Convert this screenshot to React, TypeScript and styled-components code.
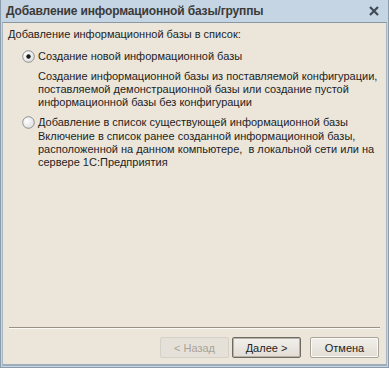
import React from "react";
import styled, { createGlobalStyle } from "styled-components";

const GlobalStyle = createGlobalStyle`
  html, body {
    margin: 0;
    padding: 0;
    background: #ffffff;
  }
  body {
    font-family: "Liberation Sans", Arial, sans-serif;
    font-size: 11px;
    color: #1e1e1e;
  }
`;

export default function App() {
  const [mode, setMode] = React.useState("create");

  return (
    <>
      <GlobalStyle />
      <Window>
        <TitleBar>
          <Title>Добавление информационной базы/группы</Title>
          <CloseButton aria-label="Закрыть">
            <svg width="10" height="10" viewBox="0 0 10 10">
              <path d="M1 1 L9 9 M9 1 L1 9" stroke="#3f4a55" strokeWidth="2.2" />
            </svg>
          </CloseButton>
        </TitleBar>
        <Body>
          <Content>
            <Caption>Добавление информационной базы в список:</Caption>
            <Option>
              <OptionLabel>
                <Radio id="r1" checked={mode === "create"} onClick={() => setMode("create")} />
                <span>Создание новой информационной базы</span>
              </OptionLabel>
              <Hint $gap={7}>
                Создание информационной базы из поставляемой конфигурации,
                <br />
                поставляемой демонстрационной базы или создание пустой
                <br />
                информационной базы без конфигурации
              </Hint>
            </Option>
            <Option>
              <OptionLabel>
                <Radio id="r2" checked={mode === "add"} onClick={() => setMode("add")} />
                <span>Добавление в список существующей информационной базы</span>
              </OptionLabel>
              <Hint $gap={1}>
                Включение в список ранее созданной информационной базы,
                <br />
                расположенной на данном компьютере,&nbsp; в локальной сети или на
                <br />
                сервере 1С:Предприятия
              </Hint>
            </Option>
          </Content>
          <Separator />
          <Buttons>
            <Button disabled>&lt; Назад</Button>
            <Button $primary>Далее &gt;</Button>
            <Button $wide>Отмена</Button>
          </Buttons>
        </Body>
      </Window>
    </>
  );
}

function Radio({ id, checked, onClick }: { id: string; checked: boolean; onClick: () => void }) {
  return (
    <RadioBox onClick={onClick}>
      <svg width="13" height="13" viewBox="0 0 13 13">
        <defs>
          <radialGradient id={id} cx="35%" cy="35%" r="75%">
            <stop offset="0%" stopColor="#ffffff" />
            <stop offset="100%" stopColor="#dcdcdc" />
          </radialGradient>
        </defs>
        <circle cx="6.5" cy="6.5" r="5.8" fill={`url(#${id})`} stroke="#8e8f8f" strokeWidth="1" />
        {checked && <circle cx="6.5" cy="6.5" r="2.2" fill="#1a1a1a" />}
      </svg>
    </RadioBox>
  );
}

const Window = styled.div`
  width: 389px;
  height: 368px;
  box-sizing: border-box;
  display: flex;
  flex-direction: column;
  background: #c6d5e3;
  border-left: 1px solid #8c9cab;
  border-right: 1px solid #8c9cab;
  border-bottom: 1px solid #8c9cab;
`;

const TitleBar = styled.div`
  height: 22px;
  display: flex;
  align-items: center;
  justify-content: space-between;
  padding: 0 6px 0 5px;
  background: #c5d5e3;
`;

const Title = styled.div`
  font-family: "Liberation Sans", Arial, sans-serif;
  font-weight: bold;
  font-size: 12px;
  color: #3a3a3a;
  letter-spacing: -0.15px;
`;

const CloseButton = styled.div`
  width: 12px;
  height: 12px;
  display: flex;
  align-items: center;
  justify-content: center;
  margin-right: 2px;
`;

const Body = styled.div`
  flex: 1;
  display: flex;
  flex-direction: column;
  background: #ebe5da;
  border-top: 1px solid #8a98a6;
  border-left: 1px solid #a7b6c4;
  border-right: 1px solid #a7b6c4;
  border-bottom: 2px solid #9eadbb;
  margin: 0 1px 1px;
`;

const Content = styled.div`
  flex: 1;
  padding: 4px 0 0 5px;
`;

const Caption = styled.div`
  line-height: 14px;
  margin-bottom: 8px;
`;

const Option = styled.div`
  padding-left: 14px;
  margin-bottom: 6px;
`;

const OptionLabel = styled.label`
  display: flex;
  align-items: center;
  gap: 3px;
  line-height: 14px;
  white-space: nowrap;
  cursor: default;
`;

const RadioBox = styled.span`
  display: inline-flex;
  flex-shrink: 0;
  width: 13px;
  height: 13px;
`;

const Hint = styled.div<{ $gap: number }>`
  margin-top: ${(p) => p.$gap}px;
  padding-left: 16px;
  line-height: 13px;
  white-space: nowrap;
`;

const Separator = styled.div`
  height: 1px;
  margin: 0 6px 0 6px;
  background: #9a9183;
  border-bottom: 1px solid #fbf9f5;
`;

const Buttons = styled.div`
  display: flex;
  justify-content: flex-end;
  gap: 3px;
  padding: 8px 7px 6px 0;
`;

const Button = styled.button<{ $primary?: boolean; $wide?: boolean }>`
  width: 69px;
  height: 21px;
  margin-left: ${(p) => (p.$wide ? 6 : 0)}px;
  font-family: "Liberation Sans", Arial, sans-serif;
  font-size: 11px;
  color: #1e1e1e;
  background: linear-gradient(#f2f0ec, #e2ddd4);
  border: 1px solid ${(p) => (p.$primary ? "#6f6a62" : "#a9a49a")};
  box-shadow: ${(p) => (p.$primary ? "inset 0 0 0 1px #b7b1a6" : "inset 0 0 0 1px #fbfaf7")};
  border-radius: 2px;
  padding: 0;

  &:disabled {
    color: #a8a39a;
    background: #e6e1d8;
    border-color: #d6d1c8;
    box-shadow: none;
  }
`;
